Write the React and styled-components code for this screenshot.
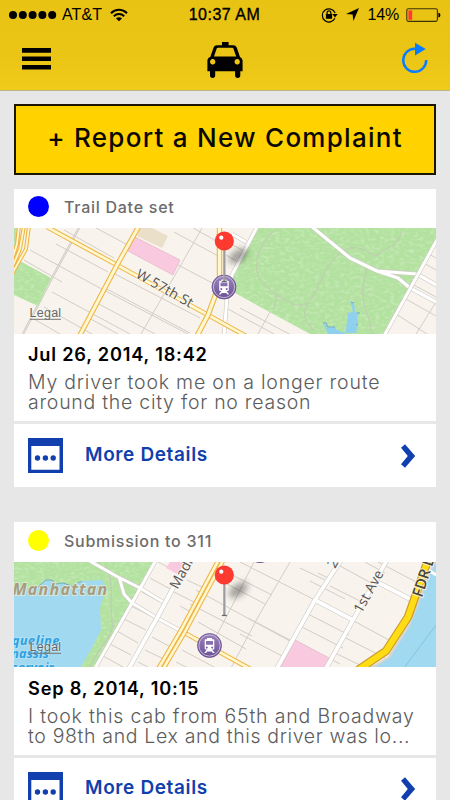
import React from 'react';
import styled, { createGlobalStyle } from 'styled-components';

const GlobalStyle = createGlobalStyle`
  * { box-sizing: border-box; }
  html, body { margin: 0; padding: 0; }
  body { background: #e7e7e7; overflow: hidden; }
  button { font: inherit; border: 0; padding: 0; background: none; cursor: pointer; }
  svg { display: block; flex: none; }
`;

const Screen = styled.div`
  width: 450px;
  height: 800px;
  overflow: hidden;
  background: #e7e7e7;
  font-family: Inter, sans-serif;
  color: #000;
`;

const Header = styled.header`
  height: 91px;
  background: linear-gradient(#e9c314, #ebc515 60%, #f1cb19);
  border-bottom: 1px solid #bcb48c;
`;

const StatusBar = styled.div`
  display: grid;
  grid-template-columns: 1fr 74px 1fr;
  align-items: center;
  height: 29px;
  padding: 0 9px;
  font: 16px/29px "Liberation Sans", Arial, sans-serif;
`;

const StatusGroup = styled.div`
  display: flex;
  align-items: center;
  justify-content: ${(p) => (p.$end ? 'flex-end' : 'flex-start')};
`;

const StatusGlyph = styled.span`
  margin-left: 8px;
`;

const Carrier = styled.span`
  margin: 0 8px 0 5px;
  letter-spacing: 0.1px;
`;

const Clock = styled.time`
  margin-left: -1px;
  text-align: center;
  white-space: nowrap;
  letter-spacing: 0.5px;
  -webkit-text-stroke: 0.35px #000;
`;

const Charge = styled.span`
  margin: 0 7px 0 9px;
  letter-spacing: -0.2px;
`;

const NavBar = styled.nav`
  display: grid;
  grid-template-columns: 1fr 36px 1fr;
  align-items: center;
  height: 61px;
  padding: 0 22px;
`;

const NavButton = styled.button`
  display: flex;
  justify-self: ${(p) => (p.$end ? 'end' : 'start')};
  margin-bottom: ${(p) => (p.$end ? 0 : 2)}px;
`;

const Content = styled.main`
  padding: 13px 14px 0;
`;

const ReportButton = styled.button`
  display: block;
  width: 422px;
  height: 71px;
  border: 2px solid #1c1600;
  background: #ffd200;
  color: #0a0800;
  font: 500 26px/63px Inter, sans-serif;
  letter-spacing: 1.27px;
  white-space: nowrap;
  padding: 0 0 4px;
  text-align: center;
`;

const Card = styled.article`
  margin-top: ${(p) => p.$gap}px;
`;

const StatusRow = styled.div`
  display: flex;
  align-items: center;
  gap: 15px;
  height: 39.4px;
  padding: 0 14px;
  background: #fff;
`;

const StatusDot = styled.span`
  width: 21px;
  height: 21px;
  margin-bottom: 4px;
  border-radius: 50%;
  background: ${(p) => p.$color};
`;

const StatusLabel = styled.span`
  font-size: 16px;
  line-height: 20px;
  font-weight: 500;
  letter-spacing: 0.74px;
  color: #6c6c6c;
  margin-bottom: 2px;
`;

const MapFrame = styled.div`
  height: 105.7px;
  overflow: hidden;
`;

const Body = styled.div`
  height: 87.2px;
  padding: 9.6px 14px 0;
  background: #fff;
`;

const DateText = styled.h2`
  margin: 0;
  font-size: 18.2px;
  line-height: 22px;
  font-weight: 600;
  letter-spacing: 0.8px;
  white-space: nowrap;
`;

const Description = styled.p`
  margin: 7px 0 0;
  font-size: 19.5px;
  line-height: 20px;
  font-weight: 300;
  color: #5c5c5c;
`;

const Line = styled.span`
  display: block;
  white-space: nowrap;
  letter-spacing: ${(p) => p.$spacing}px;
`;

const DetailsLink = styled.button`
  display: flex;
  align-items: center;
  width: 100%;
  height: 63.3px;
  margin-top: 3px;
  padding: 0 20px 0 14px;
  background: #fff;
  color: #123fae;
`;

const DetailsLabel = styled.span`
  flex: 1;
  margin: 0 0 2px 22px;
  text-align: left;
  font-size: 19px;
  line-height: 24px;
  font-weight: 600;
  letter-spacing: 0.63px;
`;

const SignalDots = () => (
  <svg width="48" height="10" viewBox="9 9.3 48 10">
    {[13, 22.8, 32.6, 42.4, 52.2].map((x) => <circle key={x} cx={x} cy="14.3" r="4" />)}
  </svg>
);

const WifiIcon = () => (
  <svg width="18" height="14" viewBox="0 0 18 14">
    <g fill="none" stroke="#000" strokeWidth="2">
      <path d="M1 5.2C5.6.6 12.4.6 17 5.2" />
      <path d="M3.8 8.2c3-2.9 7.4-2.9 10.4 0" />
    </g>
    <path d="M6 10.4c1.8-1.5 4.2-1.5 6 0L9 13.3z" />
  </svg>
);

const LockIcon = () => (
  <svg width="17" height="16" viewBox="0 0 17 16">
    <path d="M13.9 11.3A6.6 6.6 0 1 1 14.1 6" fill="none" stroke="#000" strokeWidth="1.2" />
    <path d="M11.3 7h5.4L14 10.4z" />
    <rect x="4.9" y="7" width="6.2" height="4.8" rx=".4" />
    <path d="M6.1 7V5.7a1.9 1.9 0 0 1 3.8 0V7" fill="none" stroke="#000" strokeWidth="1.2" />
  </svg>
);

const LocationIcon = () => (
  <svg width="13" height="13" viewBox="0 0 13 13">
    <path d="M13 0 7.4 13 6.6 6.6 0 6z" />
  </svg>
);

const BatteryIcon = () => (
  <svg width="35" height="14" viewBox="0 0 35 14">
    <rect x=".8" y=".8" width="30.6" height="12.6" rx="1.6" fill="none" stroke="#3c3205" strokeWidth="1.1" />
    <rect x="2.4" y="2.4" width="3.8" height="9.4" fill="#ff3b30" />
    <path d="M32.4 4.8c2.6.2 2.6 4.6 0 4.800z" />
  </svg>
);

const MenuIcon = () => (
  <svg width="29" height="22" viewBox="0 0 29 22">
    <path d="M0 0h29v4.7H0zM0 8.600h29v4.400H0zM0 17h29v4.600H0z" />
  </svg>
);

const TaxiIcon = () => (
  <svg width="36" height="36" viewBox="207 41.5 36 36">
    <path
      fillRule="evenodd"
      d="M222 41.6h6.6v3.2h4.8q2.4 0 3.3 2.2l3.3 9.4q2.600 1 2.600 3.800v10.500h-2.300v4.300q0 2.400-2.600 2.400t-2.600-2.400v-4.300h-19.900v4.300q0 2.400-2.600 2.400t-2.600-2.400v-4.300h-2.600v-10.500q0-2.800 2.900-3.800l3.300-9.400q.9-2.200 3.300-2.200h5.100zM217.800 47.200q-.8 0-1.100.8l-2.700 8h22.200l-2.800-8q-.3-.8-1.100-.8zM212.700 58.600a2.700 2.700 0 1 0 .01 0zM237.200 58.600a2.700 2.700 0 1 0 .01 0z"
    />
  </svg>
);

const RefreshIcon = () => (
  <svg width="26" height="35" viewBox="402 42 26 35">
    <path d="M426.2 60a11.500 11.500 0 1 1-11.500-11.200h2" fill="none" stroke="#0a7dff" strokeWidth="2.500" />
    <path d="M415 42.700 425.800 49 415 55.600z" fill="#0a7dff" />
  </svg>
);

const DetailsIcon = () => (
  <svg width="35" height="35" viewBox="0 0 35 35" fill="#123fae">
    <path fillRule="evenodd" d="M0 0h35v35H0zM3.300 8v23.700h28.200V8z" />
    <circle cx="9.5" cy="20" r="2.7" />
    <circle cx="17.4" cy="20" r="2.7" />
    <circle cx="25.2" cy="20" r="2.7" />
  </svg>
);

const ChevronIcon = () => (
  <svg width="15" height="24" viewBox="0 0 15 24">
    <path d="M4 .3 14.200 12 4 23.700 0 20.300 6.800 12 0 3.700z" fill="#123fae" />
  </svg>
);

const Road = ({ d, width = 3, color = '#fff', edge = '#cfcac3' }) => (
  <g fill="none" strokeLinejoin="round">
    <path d={d} stroke={edge} strokeWidth={width + 1.2} />
    <path d={d} stroke={color} strokeWidth={width} />
  </g>
);

const Avenue = ({ d, width = 4.8 }) => (
  <g fill="none" strokeLinejoin="round">
    <path d={d} stroke="#efb548" strokeWidth={width} />
    <path d={d} stroke="#fff8cf" strokeWidth={width - 2.2} />
  </g>
);

const Grass = ({ d, id }) => (
  <g>
    <clipPath id={id}><path d={d} /></clipPath>
    <path d={d} fill="#b3e2a0" />
    <filter id={`${id}-noise`} x="0" y="0" width="1" height="1">
      <feTurbulence type="fractalNoise" baseFrequency="0.2 0.34" numOctaves="2" seed="4" />
      <feColorMatrix values="0 0 0 0 .84  0 0 0 0 .94  0 0 0 0 .76  3 0 0 0 -1.35" />
    </filter>
    <g clipPath={`url(#${id})`}>
      <rect x="14" y="220" width="422" height="460" filter={`url(#${id}-noise)`} opacity=".32" />
    </g>
  </g>
);

const MapLabel = styled.text`
  font-family: "Open Sans", "Noto Sans", sans-serif;
  font-size: ${(p) => p.$size || 14}px;
  font-weight: ${(p) => p.$weight || 500};
  font-style: ${(p) => (p.$italic ? 'italic' : 'normal')};
  letter-spacing: ${(p) => p.$spacing || 0}px;
  fill: ${(p) => p.$color || '#57534f'};
  stroke: ${(p) => p.$halo || '#fbf8f2'};
  stroke-width: 2px;
  stroke-opacity: 0.8;
  paint-order: stroke;
`;

const LegalLabel = styled.text`
  font: 12.5px "Liberation Sans", Arial, sans-serif;
  fill: #666;
  stroke: #fff;
  stroke-width: 1.2px;
  stroke-opacity: 0.5;
  paint-order: stroke;
`;

const Legal = ({ y }) => (
  <g>
    <LegalLabel x="29.6" y={y} textLength="31.5">Legal</LegalLabel>
    <path d={`M30 ${y + 2}h31`} stroke="#777" strokeWidth="1" />
  </g>
);

const Station = ({ x, y }) => (
  <g transform={`translate(${x} ${y})`}>
    <circle r="12" fill="url(#badge)" stroke="#66508a" strokeWidth=".8" />
    <circle r="10.6" fill="none" stroke="#cdbfe0" strokeWidth=".9" />
    <path
      fill="#fff"
      fillRule="evenodd"
      d="M-2.500-7.500h5v1.300h1.300q1 0 1 1V3q0 1-1 1H2.600L5.300 7.400H3.400L2.300 6h-4.600l-1.100 1.400h-1.900L-2.600 4h-1.200q-1 0-1-1v-8.200q0-1 1-1h1.300zM-3.500-4.600v3.900h7v-3.900zM-2.700.900a1 1 0 1 0 .01 0zM2.700.900a1 1 0 1 0 .01 0z"
    />
  </g>
);

const Pin = ({ x, y }) => (
  <g transform={`translate(${x} ${y})`}>
    <ellipse cx="14" cy="15" rx="11" ry="6" transform="rotate(-35 14 15)" fill="#000" opacity=".34" filter="url(#soft)" />
    <path d="M-2.500 40.500h5" stroke="#444" strokeWidth="1.2" opacity=".8" />
    <path d="M0 8v32" stroke="#8b8b90" strokeWidth="2.2" />
    <path d="M-.4 9v30" stroke="#c9c9cc" strokeWidth=".7" />
    <circle r="9.6" fill="#fd3a30" />
    <circle cx="-3" cy="-3.3" r="2.1" fill="#fff" />
  </g>
);

const MapDefs = () => (
  <defs>
    <linearGradient id="badge" x1="0" y1="0" x2="0" y2="1">
      <stop offset="0" stopColor="#9c86bd" />
      <stop offset="1" stopColor="#6b4f95" />
    </linearGradient>
    <filter id="soft" x="-50%" y="-50%" width="200%" height="200%">
      <feGaussianBlur stdDeviation="3" />
    </filter>
  </defs>
);

const parkSouth = 'M257 228H436V240L417 274 385 334H310L235 293 232 275z';
const parkWest = 'M14 562H155L132 603 95 668H14z';

const MidtownMap = () => (
  <svg width="422" height="106" viewBox="14 228 422 106">
    <MapDefs />
    <rect x="14" y="228" width="422" height="106" fill="#f8f4ed" />
    <g stroke="#d2cec7" strokeWidth="1" fill="none">
      <path d="M30 250 98 287 188 334M24 260 62 282M52 292 130 334M44 307 92 334M34 319 60 334M56 244 108 272M64 230 114 258M96 228 126 244M142 246 218 286M174 232 220 257M193 228 222 244M113 273 200 318M105 288 190 333M97 303 155 334M89 318 118 334" />
      <path d="M202 228 182 263 141 334M246 252 225 241M240 263 226 255M240 308 310 345M226 308 274 334M271 310 258 334M396 314 427 334M404 298 436 316M412 284 436 297M422 262 436 270M427 253 436 258M436 302 416 334" />
    </g>
    <path d="M79 228 52 278 23 334" fill="none" stroke="#c9c5bf" strokeWidth="2.2" />
    <path d="M79 228 52 278 23 334" fill="none" stroke="#f5f1ea" strokeWidth=".7" />
    <path d="M140 228H152L168 236 162 248 137 236z" fill="#eadfc8" />
    <path d="M135 237 180 260 173 275 128 251z" fill="#f9c9df" stroke="#e2b7c9" strokeWidth=".7" />
    <Grass id="corner" d="M20 261 51 278 38 306 14 295V269z M14 228H18L14 254z" />
    <Grass id="central" d={parkSouth} />
    <g fill="none" stroke="#bed0ae" strokeWidth="1.3">
      <path d="M275 230C263 240 253 258 258 276 266 288 277 296 290 303 297 307 308 304 310 301 322 281 326 265 336 257 350 240 366 250 375 256 389 247 400 244 402 229M277 296 274 309M308 304C300 314 308 326 315 331M367 269C361 287 361 300 369 319L372 334" />
    </g>
    <path d="M323 323 326 325 328 328 335 327 337 330 345 333H356L358 323 357 316 359 313 355 312 354 303 350 301 353 312 348 313 347 323 345 334H328z" fill="#8fd0ee" />
    <path d="M323 323h3l2 4h7M357 313h3M351 302l3 1M356 325l2-1" fill="none" stroke="#6caac5" strokeWidth="1" />
    <Road width={3.2} d="M311 226 350 258 377 271 398 278 410 288 438 303M377 271 417 274 438 286" />
    <Road width={3} d="M438 238 384 336M257 227 232 275 227 297 224 336M232 234 246 242" />
    <Avenue d="M47 227 117 265 208 315 246 336" />
    <Avenue d="M139 226 117 265 80 335" width={5.2} />
    <Avenue d="M19 226 17 244 12 260M29 226 26 249 12 274M24 226 20 249 12 268" width={4} />
    <Avenue d="M219.5 226V284L208 315 197 336" width={5.5} />
    <MapLabel transform="translate(135 277) rotate(29.500)" $spacing={0.07}>W 57th St</MapLabel>
    <Legal y={317.3} />
    <Station x={224} y={287} />
    <Pin x={224.3} y={241} />
  </svg>
);

const UpperEastMap = () => (
  <svg width="422" height="106" viewBox="14 562 422 106">
    <rect x="14" y="562" width="422" height="106" fill="#f8f4ed" />
    <g stroke="#d2cec7" strokeWidth="1" fill="none">
      <path d="M150 578 172 590M142 592 162 603M158 562 180 573M131 606 153 617M124 619 146 630M117 631 138 643M110 644 131 655M103 656 125 668M180 606 193 613M170 590 200 605M187 580 204 588M164 622 180 631M152 637 176 650M145 650 168 661M138 662 150 668M196 590 310 652M190 604 252 636M198 622 246 649M210 575 265 604M232 575 272 595M240 562 315 600M182 650 216 668M176 662 188 668" />
      <path d="M290 562 258 617 231 668M254 562 230 610 213 642M248 618 290 640M240 634 282 656M300 568 325 580M310 581 345 599M330 586 366 604M340 566 373 584M318 573 330 579M365 562 385 573M378 562 420 584M308 614 349 635M302 627 343 648M295 640 340 664M352 620 400 646M342 636 385 658M333 652 366 668" />
    </g>
    <Grass id="west" d={parkWest} />
    <path d="M14 588 38 588 42 583 46 580 52 581 56 585 63 583 72 587 82 581 102 580 106 587 100 608 101 630 92 648 80 668H14z" fill="#a1d9f0" />
    <path d="M38 587 46 580 52 580 56 584 63 583 72 586 82 581" fill="none" stroke="#77adc8" strokeWidth="1" />
    <path d="M106 566C116 585 108 605 113 626 109 642 96 650 90 668" fill="none" stroke="#c0cdb4" strokeWidth="1.3" />
    <path d="M170 562H184L177 574 166 568z" fill="#f9c9df" />
    <path d="M295 640 329 658 324 668H280z" fill="#f9c9df" stroke="#e6bccd" strokeWidth=".6" />
    <path d="M434 562H436V668H368L390 657 410 625 418 603z" fill="#a1d9f0" />
    <path d="M434 562 418 603 409 625 389 657 372 668" fill="none" stroke="#d9d5ce" strokeWidth="2.2" />
    <path d="M436 625 404 668" stroke="#7ebbe2" strokeWidth=".8" />
    <Road width={3} d="M156 560 132 603 94 670M88 560 118 577 140 588 163 602M119 577 124 594 132 603 157 618 183 632" />
    <Road width={3.8} d="M188 560 157 618 128 670M341 560 315 600 276 670M387 560 353 620 325 670M315 600 353 620M377 582 412 600" />
    <path d="M428 570 438 576" stroke="#fff" strokeWidth="3" />
    <Avenue d="M183 632 254 671" />
    <Avenue d="M221 560 183 631 160 670" width={9} />
    <path d="M221 560 183 631 160 670" fill="none" stroke="#efb548" strokeWidth="1.6" />
    <g fill="none" strokeLinejoin="round">
      <path d="M428 560 415 597 408 617 386 651 358 670" stroke="#c99b2a" strokeWidth="8.5" />
      <path d="M428 560 415 597 408 617 386 651 358 670" stroke="#ffdc14" strokeWidth="6.2" />
    </g>
    <circle cx="260" cy="551" r="12" fill="#68508f" />
    <MapLabel transform="translate(177.500 590) rotate(-61)">Madison</MapLabel>
    <MapLabel transform="translate(335 569) rotate(-61)">2nd Ave</MapLabel>
    <MapLabel transform="translate(361.500 614) rotate(-61)" $spacing={-0.1}>1st Ave</MapLabel>
    <MapLabel transform="translate(422 598) rotate(-72)" $weight={600} $color="#4a4636" $size={15}>FDR Dr</MapLabel>
    <MapLabel x="12.5" y="594.5" $size={16} $weight={700} $italic $spacing={1.25} $color="#a79c82" $halo="#e6ecd5">Manhattan</MapLabel>
    <g textAnchor="end">
      <MapLabel x="60" y="644.5" $size={12.5} $weight={700} $italic $spacing={0.6} $color="#2d9fe0" $halo="#b6e2f5">Jacqueline</MapLabel>
      <MapLabel x="49" y="658" $size={12.5} $weight={700} $italic $spacing={0.2} $color="#2d9fe0" $halo="#b6e2f5">Onassis</MapLabel>
      <MapLabel x="54" y="672" $size={12.5} $weight={700} $italic $spacing={0.2} $color="#2d9fe0" $halo="#b6e2f5">Reservoir</MapLabel>
    </g>
    <Legal y={651.3} />
    <Station x={209.5} y={645.5} />
    <Pin x={224.3} y={575} />
  </svg>
);

const complaints = [
  {
    status: 'Trail Date set',
    color: '#0000ff',
    gap: 13.7,
    Map: MidtownMap,
    date: 'Jul 26, 2014, 18:42',
    lines: [['My driver took me on a longer route', 0.79], ['around the city for no reason', 0.73]],
  },
  {
    status: 'Submission to 311',
    color: '#ffff00',
    gap: 35.1,
    Map: UpperEastMap,
    date: 'Sep 8, 2014, 10:15',
    lines: [['I took this cab from 65th and Broadway', 0.83], ['to 98th and Lex and this driver was lo...', 0.65]],
  },
];

const ComplaintCard = ({ status, color, gap, Map, date, lines }) => (
  <Card $gap={gap}>
    <StatusRow>
      <StatusDot $color={color} />
      <StatusLabel>{status}</StatusLabel>
    </StatusRow>
    <MapFrame><Map /></MapFrame>
    <Body>
      <DateText>{date}</DateText>
      <Description>
        {lines.map(([text, spacing]) => <Line key={text} $spacing={spacing}>{text}</Line>)}
      </Description>
    </Body>
    <DetailsLink>
      <DetailsIcon />
      <DetailsLabel>More Details</DetailsLabel>
      <ChevronIcon />
    </DetailsLink>
  </Card>
);

export default function App() {
  return (
    <Screen>
      <GlobalStyle />
      <Header>
        <StatusBar>
          <StatusGroup>
            <SignalDots />
            <Carrier>AT&amp;T</Carrier>
            <WifiIcon />
          </StatusGroup>
          <Clock>10:37 AM</Clock>
          <StatusGroup $end>
            <LockIcon />
            <StatusGlyph><LocationIcon /></StatusGlyph>
            <Charge>14%</Charge>
            <BatteryIcon />
          </StatusGroup>
        </StatusBar>
        <NavBar>
          <NavButton aria-label="Menu"><MenuIcon /></NavButton>
          <TaxiIcon />
          <NavButton $end aria-label="Refresh"><RefreshIcon /></NavButton>
        </NavBar>
      </Header>
      <Content>
        <ReportButton>+ Report a New Complaint</ReportButton>
        {complaints.map((c) => <ComplaintCard key={c.date} {...c} />)}
      </Content>
    </Screen>
  );
}
